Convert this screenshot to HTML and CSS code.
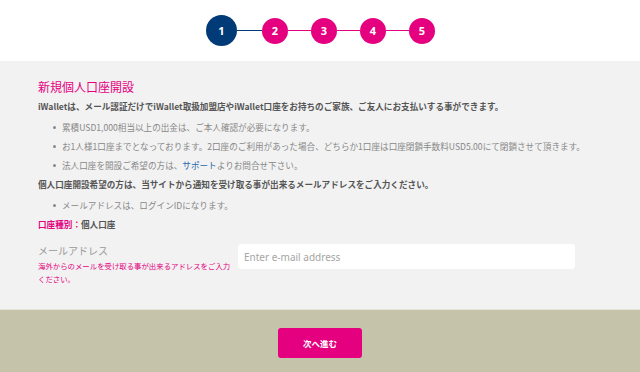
FILE: index.html
```html
<!DOCTYPE html>
<html lang="ja">
<head>
  <meta charset="UTF-8">
  <title>新規個人口座開設</title>
  <link rel="stylesheet" href="styles.css">
</head>
<body>
<div class="steps">
  <span class="step current">1</span>
  <span class="line done"></span>
  <span class="step">2</span>
  <span class="line"></span>
  <span class="step">3</span>
  <span class="line"></span>
  <span class="step">4</span>
  <span class="line"></span>
  <span class="step">5</span>
</div>

<div class="main">
  <h1 class="title">新規個人口座開設</h1>
  <p class="strong">iWalletは、メール認証だけでiWallet取扱加盟店やiWallet口座をお持ちのご家族、ご友人にお支払いする事ができます。</p>
  <ul class="notes">
    <li>累積USD1,000相当以上の出金は、ご本人確認が必要になります。</li>
    <li>お1人様1口座までとなっております。2口座のご利用があった場合、どちらか1口座は口座閉鎖手数料USD5.00にて閉鎖させて頂きます。</li>
    <li>法人口座を開設ご希望の方は、<a href="#">サポート</a>よりお問合せ下さい。</li>
  </ul>
  <p class="strong">個人口座開設希望の方は、当サイトから通知を受け取る事が出来るメールアドレスをご入力ください。</p>
  <ul class="notes">
    <li>メールアドレスは、ログインIDになります。</li>
  </ul>
  <p class="strong type"><span class="pink">口座種別：</span>個人口座</p>

  <div class="form-row">
    <div class="label">
      <div class="label-name">メールアドレス</div>
      <div class="label-hint">海外からのメールを受け取る事が出来るアドレスをご入力ください。</div>
    </div>
    <input class="email" type="text" placeholder="Enter e-mail address">
  </div>
</div>

<div class="foot">
  <button class="next">次へ進む</button>
</div>
</body>
</html>
```

FILE: styles.css
```css
* {
  margin: 0;
  padding: 0;
  box-sizing: border-box;
}

body {
  font-family: "Noto Sans CJK JP", "Noto Sans", sans-serif;
  color: #777;
  background: #fff;
}

/* steps */
.steps {
  height: 61px;
  display: flex;
  align-items: center;
  justify-content: center;
  padding-left: 1px;
}

.step {
  width: 26px;
  height: 26px;
  border-radius: 50%;
  background: #e4007f;
  color: #fff;
  font: bold 11px/26px "Noto Sans", sans-serif;
  text-align: center;
}

.step.current {
  width: 31px;
  height: 31px;
  line-height: 31px;
  background: #003b77;
}

.line {
  width: 23px;
  height: 1px;
  background: #e4007f;
}

.line.done {
  width: 25px;
  background: #003b77;
}

/* main */
.main {
  background: #f2f2f2;
  padding: 16px 38px 24px;
  height: 248px;
}

.title {
  font-size: 12px;
  font-weight: normal;
  line-height: 20px;
  color: #e4007f;
}

.strong {
  font-size: 8.6px;
  line-height: 19px;
  font-weight: bold;
  color: #555;
}

.notes {
  padding-left: 24px;
  margin-top: 2px;
  font-size: 8.6px;
  line-height: 19px;
  color: #888;
  list-style: none;
}

.notes li {
  position: relative;
}

.notes li::before {
  content: "";
  position: absolute;
  left: -9px;
  top: 8px;
  width: 3px;
  height: 3px;
  border-radius: 50%;
  background: #888;
}

.notes a {
  color: #2a68b0;
  text-decoration: none;
}

.pink {
  color: #e4007f;
}

.form-row {
  display: flex;
  align-items: flex-start;
  margin-top: 10px;
}

.label {
  width: 200px;
  flex: none;
}

.label-name {
  font-size: 10px;
  line-height: 14px;
  color: #999;
}

.label-hint {
  font-size: 7.4px;
  line-height: 13px;
  color: #e4007f;
  margin-top: 1px;
  padding-right: 6px;
}

.email {
  width: 337px;
  height: 25px;
  border: 0;
  border-radius: 3px;
  background: #fff;
  padding: 0 6px;
  font-family: "Noto Sans", sans-serif;
  font-size: 10px;
  color: #666;
  outline: none;
}

.email::placeholder {
  color: #a5a5a5;
}

/* foot */
.foot {
  background: #c5c3a9;
  height: 63px;
  padding-top: 18px;
  text-align: center;
  border-top: 1px solid #e6e4d6;
}

.next {
  width: 84px;
  height: 30px;
  border: 0;
  border-radius: 3px;
  background: #e4007f;
  color: #fff;
  font-family: "Noto Sans CJK JP", sans-serif;
  font-size: 8.5px;
  font-weight: bold;
  cursor: pointer;
}
```
